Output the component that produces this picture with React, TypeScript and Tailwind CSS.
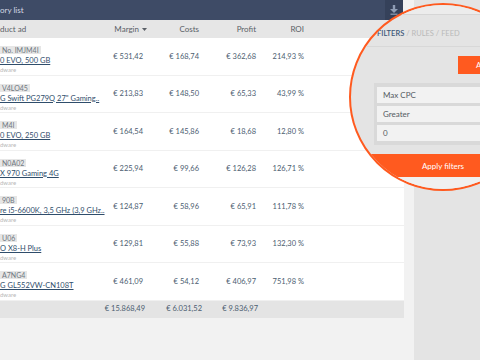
const rows = [
  { tag: 'No. IMJM4I', name: '0 EVO, 500 GB', margin: '531,42', costs: '168,74', profit: '362,68', roi: '214,93 %' },
  { tag: 'V4LO45', name: 'G Swift PG279Q 27" Gaming..', margin: '213,83', costs: '148,50', profit: '65,33', roi: '43,99 %' },
  { tag: 'M4I', name: '0 EVO, 250 GB', margin: '164,54', costs: '145,86', profit: '18,68', roi: '12,80 %' },
  { tag: 'N0A02', name: 'X 970 Gaming 4G', margin: '225,94', costs: '99,66', profit: '126,28', roi: '126,71 %' },
  { tag: '90B', name: 're i5-6600K, 3,5 GHz (3,9 GHz..', margin: '124,87', costs: '58,96', profit: '65,91', roi: '111,78 %' },
  { tag: 'U06', name: 'O X8-H Plus', margin: '129,81', costs: '55,88', profit: '73,93', roi: '132,30 %' },
  { tag: 'A7NG4', name: 'G GL552VW-CN108T', margin: '461,09', costs: '54,12', profit: '406,97', roi: '751,98 %' },
]

const cols = 'grid grid-cols-[100px_43px_56px_57px_48px]'

export default function App() {
  return (
    <div className="relative w-[480px] h-[360px] overflow-hidden flex bg-[#e4e4e4] font-['Lato',sans-serif]">
      {/* table side */}
      <div className="w-[414px] h-full bg-[#f2f2f2] flex flex-col">
        <div className="w-[404px] flex flex-col">
          <div className="h-[20px] w-[403px] bg-[#3e4b66] flex items-center justify-between">
            <span className="text-[8px] text-[#d3d9e3]">ory list</span>
            <div className="w-[18px] h-full bg-[#35415a] flex items-center justify-center">
              <svg width="8" height="10" viewBox="0 0 8 10" fill="#8f9db5">
                <rect x="2.8" y="0" width="2.4" height="4" />
                <polygon points="0,4 8,4 4,8" />
                <rect x="0.5" y="8.6" width="7" height="1.2" />
              </svg>
            </div>
          </div>

          <div className={`${cols} h-[18px] bg-[#e6e6e6] items-center text-[8px] text-[#5a5f66]`}>
            <span>duct ad</span>
            <span className="text-right pr-[4px] -mr-[8px] flex items-center justify-end gap-[3px]">
              Margin
              <svg width="5" height="3" viewBox="0 0 5 3" fill="#5a5f66">
                <polygon points="0,0 5,0 2.5,3" />
              </svg>
            </span>
            <span className="text-right">Costs</span>
            <span className="text-right">Profit</span>
            <span className="text-right">ROI</span>
          </div>

          <div className="bg-white flex flex-col">
            {rows.map((r) => (
              <div key={r.tag} className={`${cols} h-[37.5px] border-b border-[#f0f0f0] items-center`}>
                <div className="flex flex-col items-start self-start pt-[8px]">
                  <span className="bg-[#e6e6e6] text-[#6e7680] text-[7px] leading-[8px] px-[2px]">{r.tag}</span>
                  <span className="mt-[2px] text-[7.5px] leading-[10px] text-[#2f4d6b] underline whitespace-nowrap">{r.name}</span>
                  <span className="text-[6px] leading-[8px] text-[#b8b8b8]">dware</span>
                </div>
                <span className="text-right text-[7.5px] text-[#4b5d70]">€ {r.margin}</span>
                <span className="text-right text-[7.5px] text-[#4b5d70]">€ {r.costs}</span>
                <span className="text-right text-[7.5px] text-[#4b5d70]">€ {r.profit}</span>
                <span className="text-right text-[7.5px] text-[#4b5d70]">{r.roi}</span>
              </div>
            ))}
          </div>

          <div className={`${cols} h-[17px] bg-[#e4e4e4] items-center text-[7.5px] text-[#4b5d70]`}>
            <span />
            <span className="text-right -mr-[2px]">€ 15.868,49</span>
            <span className="text-right -mr-[3px]">€ 6.031,52</span>
            <span className="text-right -mr-[2px]">€ 9.836,97</span>
            <span />
          </div>
        </div>
      </div>
      <div className="flex-1 bg-[#e4e4e4]" />

      {/* magnifier */}
      <div className="absolute left-[349px] top-[3px] w-[188px] h-[188px] rounded-full border-2 border-[#ff5a1f] overflow-hidden bg-[#e4e4e4] flex flex-col">
        <div className="h-[10px] shrink-0 bg-[#ececec] border-b border-[#d6d6d6]" />
        <div className="h-[32px] shrink-0 pt-[14px] pl-[26px] border-b border-[#d8d8d8] text-[7.5px] leading-[9px] whitespace-nowrap">
          <span className="text-[#3d5878] font-semibold">FILTERS</span>
          <span className="text-[#b9b9b9]"> / RULES / FEED</span>
        </div>
        <div className="mt-[9px] h-[18px] shrink-0 pl-[107px]">
          <div className="h-full bg-[#ff5a1f] text-white text-[8px] flex items-center pl-[18px] whitespace-nowrap">Add filter</div>
        </div>
        <div className="mt-[9px] ml-[23px] shrink-0 bg-[#d9d9d9] px-[3px] py-[4px] flex flex-col gap-[3px]">
          <div className="h-[16px] bg-[#f2f2f2] pl-[6px] flex items-center text-[8px] text-[#555b62]">Max CPC</div>
          <div className="h-[16px] bg-[#f2f2f2] pl-[6px] flex items-center text-[8px] text-[#555b62]">Greater</div>
          <div className="h-[16px] bg-[#f2f2f2] pl-[6px] flex items-center text-[8px] text-[#555b62]">0</div>
        </div>
        <div className="mt-[9px] h-[23px] shrink-0 bg-[#ff5a1f] flex items-center justify-center text-white text-[8px]">
          Apply filters
        </div>
        <div className="flex-1 bg-[#f0f0f0]" />
      </div>
    </div>
  )
}
